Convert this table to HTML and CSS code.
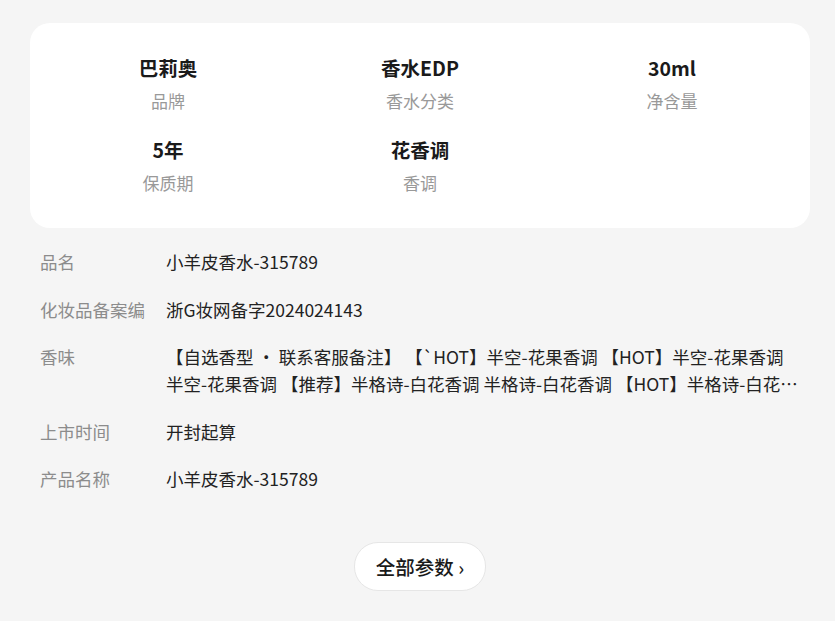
FILE: index.html
```html
<!DOCTYPE html>
<html>
<head>
  <title>商品参数</title>
  <meta http-equiv="Content-Type" content="text/html; charset=UTF-8" />
  <link rel="stylesheet" href="styles.css">
</head>
<body>
  <div class="page">
    <div class="summary">
      <div class="item">
        <div class="value">巴莉奥</div>
        <div class="label">品牌</div>
      </div>
      <div class="item">
        <div class="value">香水EDP</div>
        <div class="label">香水分类</div>
      </div>
      <div class="item">
        <div class="value">30ml</div>
        <div class="label">净含量</div>
      </div>
      <div class="item">
        <div class="value">5年</div>
        <div class="label">保质期</div>
      </div>
      <div class="item">
        <div class="value">花香调</div>
        <div class="label">香调</div>
      </div>
    </div>

    <div class="details">
      <div class="row">
        <div class="name">品名</div>
        <div class="text">小羊皮香水-315789</div>
      </div>
      <div class="row">
        <div class="name">化妆品备案编</div>
        <div class="text">浙G妆网备字2024024143</div>
      </div>
      <div class="row">
        <div class="name">香味</div>
        <div class="text clamp">【自选香型 · 联系客服备注】 【`HOT】半空-花果香调 【HOT】半空-花果香调 半空-花果香调 【推荐】半格诗-白花香调 半格诗-白花香调 【HOT】半格诗-白花香调 半格诗-白花香调 【新品】晚香玉-东方木质调</div>
      </div>
      <div class="row">
        <div class="name">上市时间</div>
        <div class="text">开封起算</div>
      </div>
      <div class="row">
        <div class="name">产品名称</div>
        <div class="text">小羊皮香水-315789</div>
      </div>
    </div>

    <div class="more">
      <button class="more-btn">全部参数 <span class="arrow">›</span></button>
    </div>
  </div>
</body>
</html>
```

FILE: styles.css
```css
body {
  margin: 0;
  background-color: #f5f5f5;
  font-family: "Noto Sans CJK SC", "Noto Sans", sans-serif;
}
.page {
  padding: 23px 25px 0 30px;
}
.summary {
  background-color: #fff;
  border-radius: 20px;
  padding: 33px 12px 34px;
  display: grid;
  grid-template-columns: repeat(3, 1fr);
  row-gap: 26px;
}
.item {
  text-align: center;
}
.value {
  font-size: 19.5px;
  line-height: 24px;
  font-weight: bold;
  color: #1a1a1a;
  margin-bottom: 10px;
}
.label {
  font-size: 17px;
  line-height: 22px;
  color: #999;
}
.details {
  padding: 20px 10px 0 10px;
  display: flex;
  flex-direction: column;
  gap: 20.5px;
}
.row {
  display: flex;
  font-size: 17.5px;
  line-height: 27px;
}
.name {
  width: 126px;
  flex-shrink: 0;
  color: #8c8c8c;
}
.text {
  flex: 1;
  color: #222;
}
.clamp {
  display: -webkit-box;
  -webkit-box-orient: vertical;
  -webkit-line-clamp: 2;
  overflow: hidden;
}
.more {
  display: flex;
  justify-content: center;
  padding-top: 50px;
}
.more-btn {
  font-family: inherit;
  background-color: #fff;
  border: 1px solid #e6e6e6;
  border-radius: 24px;
  height: 49px;
  padding: 0 21px;
  font-size: 19.5px;
  font-weight: 500;
  color: #1a1a1a;
}
.arrow {
  font-size: 19px;
}
```
